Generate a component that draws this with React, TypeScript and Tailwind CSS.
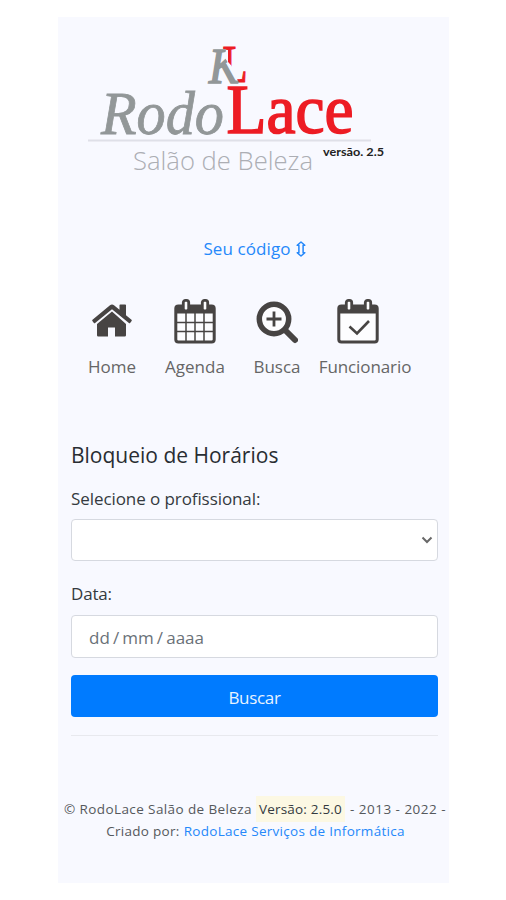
import type { ReactNode } from 'react';

function Logo() {
  return (
    <svg width="391" height="170" viewBox="58 17 391 170" className="block shrink-0" aria-label="RodoLace Salão de Beleza">
      <defs>
        <clipPath id="k-shape">
          <path d="M200 40H227L225 58 230 66 242 74V90H200Z" />
        </clipPath>
        <clipPath id="l-shape">
          <path d="M222 44H250V90H240L236 74 231 65 228 62V50H222Z" />
        </clipPath>
      </defs>
      <g fontFamily="'Liberation Serif', serif">
        <text x="222.500" y="82" fontSize="52" fill="#ed1c24" stroke="#ed1c24" strokeWidth="1.200" textLength="25" lengthAdjust="spacingAndGlyphs" clipPath="url(#l-shape)">L</text>
        <text x="209" y="82.500" fontSize="51" fontStyle="italic" fill="#929798" stroke="#929798" strokeWidth="1.600" textLength="30" lengthAdjust="spacingAndGlyphs" clipPath="url(#k-shape)">K</text>
        <text x="101" y="134" fontSize="61" fontStyle="italic" fill="#929798" stroke="#929798" strokeWidth="0.8" textLength="123" lengthAdjust="spacingAndGlyphs">Rodo</text>
        <text x="226.500" y="133" fontSize="69" fill="#ed1c24" stroke="#ed1c24" strokeWidth="1.600" textLength="127" lengthAdjust="spacingAndGlyphs">Lace</text>
      </g>
      <path d="M88 140.500H371" stroke="#dfe0e8" strokeWidth="2" />
      <text x="133" y="170" fontSize="26" fontWeight="300" fontFamily="'Open Sans', sans-serif" fill="#acaeb4" textLength="180" lengthAdjust="spacingAndGlyphs">Salão de Beleza</text>
      <text x="323" y="156" fontSize="11" fontWeight="700" fontFamily="Lato, sans-serif" fill="#222" textLength="61" lengthAdjust="spacingAndGlyphs">versão. 2.5</text>
    </svg>
  );
}

function HomeIcon() {
  return (
    <svg width="42" height="48" viewBox="0 0 42 48" fill="#474443">
      <path d="M21 13.500 6 26v11.200q0 1.300 1.300 1.300H17V29.500h7v9h9.700q1.300 0 1.300-1.300V26Z" />
      <path d="M21 6.500q1.100 0 2 .700l5.500 4.600V7.300q0-.8.8-.8h4.900q.8 0 .8.8v9.900l5.500 4.600q.7.600.1 1.200l-1.500 1.900q-.5.600-1.200 0L21 11.300 4.100 24.900q-.7.600-1.200 0L1.400 23q-.600-.6.1-1.200L19 7.200q.9-.7 2-.7Z" />
    </svg>
  );
}

function CalendarTop() {
  return (
    <>
      <rect x="1.800" y="8" width="38.400" height="36" rx="2.600" fill="#fdfdff" stroke="#474443" strokeWidth="3" />
      <path d="M2 8h38v7.500H2Z" fill="#474443" />
      <rect x="9.300" y="2.400" width="5.400" height="10.600" rx="2.200" fill="#fdfdff" stroke="#474443" strokeWidth="2.800" />
      <rect x="28.300" y="2.400" width="5.400" height="10.600" rx="2.200" fill="#fdfdff" stroke="#474443" strokeWidth="2.800" />
    </>
  );
}

function AgendaIcon() {
  return (
    <svg width="42" height="48" viewBox="0 0 42 48">
      <CalendarTop />
      <path d="M12 15v28M21 15v28M30 15v28M3 24.500h36M3 33.500h36" stroke="#474443" strokeWidth="1.500" />
    </svg>
  );
}

function StaffIcon() {
  return (
    <svg width="42" height="48" viewBox="0 0 42 48">
      <CalendarTop />
      <path d="m12.500 28.500 7.500 7 12-12.500" fill="none" stroke="#474443" strokeWidth="2.600" />
    </svg>
  );
}

function SearchIcon() {
  return (
    <svg width="42" height="48" viewBox="0 0 42 48" fill="none" stroke="#474443">
      <circle cx="18" cy="21" r="14.700" fill="#fdfdff" strokeWidth="5.500" />
      <path d="m29.500 32.500 9.500 9.500" strokeWidth="6" strokeLinecap="round" />
      <path d="M10.500 21h15M18 13.500v15" strokeWidth="2.800" />
    </svg>
  );
}

function UpDownIcon() {
  return (
    <svg width="10" height="16" viewBox="0 0 10 16" fill="none" stroke="#2588fa" strokeWidth="1.500" strokeLinejoin="round">
      <path d="M5 1 1.200 4.200H2.900v7.600H1.200L5 15l3.800-3.200H7.100V4.200h1.700Z" />
    </svg>
  );
}

function MenuItem({ label, className, children }: { label: ReactNode; className: string; children: ReactNode }) {
  return (
    <a className={`flex flex-col ${className}`}>
      {children}
      <span className="mt-[9px] text-center whitespace-nowrap text-[17px] leading-6 text-[#666]">{label}</span>
    </a>
  );
}

export default function App() {
  return (
    <div className="h-[900px] w-[506px] bg-white pt-[17px] pl-[58px] font-['Open_Sans','Noto_Sans',sans-serif] text-[#343a40]">
      <main className="flex h-[866px] w-[391px] flex-col bg-[#f8f9ff]">
        <Logo />
        <div className="mt-[50px] flex h-6 items-center justify-center gap-[5px] pl-[2px] text-[17px] text-[#2588fa]">
          <span className="tracking-[0.1px]">Seu código</span>
          <UpDownIcon />
        </div>

        <nav className="mt-[37px] flex h-[82px]">
          <MenuItem className="ml-[21px] w-[66px] items-center" label="Home"><HomeIcon /></MenuItem>
          <MenuItem className="ml-[17px] w-[66px] items-center" label="Agenda"><AgendaIcon /></MenuItem>
          <MenuItem className="ml-[16px] w-[66px] items-center" label="Busca"><SearchIcon /></MenuItem>
          <MenuItem className="ml-[9px] w-[96px]" label={<span className="-ml-[4px] tracking-[-0.1px]">Funcionario</span>}>
            <div className="ml-[18px]"><StaffIcon /></div>
          </MenuItem>
        </nav>

        <form className="mt-[58px] ml-[13px] w-[367px]">
          <h1 className="h-[34px] text-[21px] leading-[34px] text-[#292d32]">Bloqueio de Horários</h1>
          <label className="mt-[15px] block h-6 text-[17px] leading-6 tracking-[-0.08px]">Selecione o profissional:</label>
          <div className="mt-[8px] flex h-[42px] items-center justify-end rounded border border-[#d6d9e0] bg-white pr-[4px]">
            <svg width="12" height="8" viewBox="0 0 12 8" fill="none" stroke="#686868" strokeWidth="2">
              <path d="m1.500 1.500 4.500 4.500 4.500-4.500" />
            </svg>
          </div>
          <label className="mt-[21px] block h-6 text-[17px] leading-6 tracking-[-0.2px]">Data:</label>
          <div className="mt-[9px] flex h-[43px] items-center rounded border border-[#d6d9e0] bg-white pl-[17px] text-[17px] text-[#6a7178]">
            <span className="mt-[2px] [word-spacing:-1.300px]">dd / mm / aaaa</span>
          </div>
          <button type="button" className="mt-[17px] flex h-[42px] w-full items-center justify-center rounded bg-[#007bff] pt-[3px] text-[17px] tracking-[-0.3px] text-[#e8f3ff]">
            Buscar
          </button>
          <hr className="mt-[18px] border-[#e8e9ee]" />
        </form>

        <footer className="mt-[60px] text-[13.500px] tracking-[0.4px] text-[#55585c]">
          <div className="flex h-[26px] items-center pl-[6px] whitespace-nowrap">
            <span>© RodoLace Salão de Beleza</span>
            <span className="ml-[4px] flex h-[26px] w-[89px] items-center justify-center bg-[#fcf8e3] tracking-[0.2px] text-[#343a40]">Versão: 2.5.0</span>
            <span className="ml-[5px] tracking-[0.480px]">- 2013 - 2022 -</span>
          </div>
          <div className="-mt-px flex h-5 items-center justify-center gap-1 pl-[4px] whitespace-nowrap tracking-[0.290px]">
            <span>Criado por:</span>
            <a className="text-[#2588fa]">RodoLace Serviços de Informática</a>
          </div>
        </footer>
      </main>
    </div>
  );
}
